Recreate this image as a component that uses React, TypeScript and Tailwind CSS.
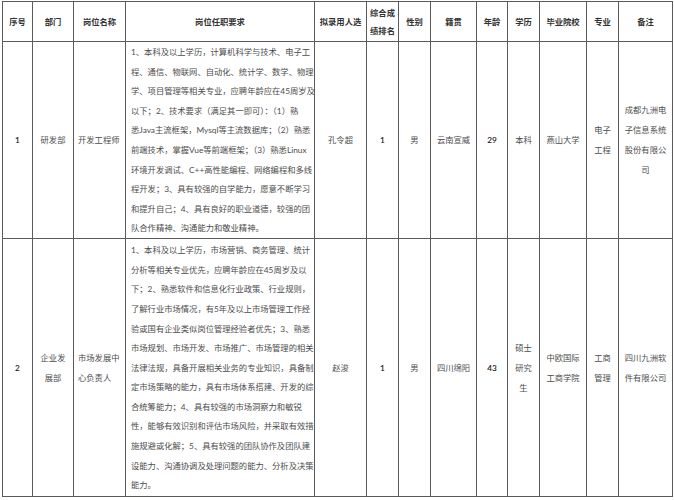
import React from "react";

const font = { fontFamily: '"Lato", "Noto Sans CJK SC", sans-serif' };

const row1Req = [
  "1、本科及以上学历，计算机科学与技术、电子工",
  "程、通信、物联网、自动化、统计学、数学、物理",
  "学、项目管理等相关专业，应聘年龄应在45周岁及",
  "以下；2、技术要求（满足其一即可）：（1）熟",
  "悉Java主流框架，Mysql等主流数据库；（2）熟悉",
  "前端技术，掌握Vue等前端框架；（3）熟悉Linux",
  "环境开发调试、C++高性能编程、网络编程和多线",
  "程开发；3、具有较强的自学能力，愿意不断学习",
  "和提升自己；4、具有良好的职业道德，较强的团",
  "队合作精神、沟通能力和敬业精神。",
];

const row2Req = [
  "1、本科及以上学历，市场营销、商务管理、统计",
  "分析等相关专业优先，应聘年龄应在45周岁及以",
  "下；2、熟悉软件和信息化行业政策、行业规则，",
  "了解行业市场情况，有5年及以上市场管理工作经",
  "验或国有企业类似岗位管理经验者优先；3、熟悉",
  "市场规划、市场开发、市场推广、市场管理的相关",
  "法律法规，具备开展相关业务的专业知识，具备制",
  "定市场策略的能力，具有市场体系搭建、开发的综",
  "合统筹能力；4、具有较强的市场洞察力和敏锐",
  "性，能够有效识别和评估市场风险，并采取有效措",
  "施规避或化解；5、具有较强的团队协作及团队建",
  "设能力、沟通协调及处理问题的能力、分析及决策",
  "能力。",
];

function Cell({
  lines,
  align = "center",
  bold = false,
  num = false,
  leading = "leading-[20px]",
}: {
  lines: string[];
  align?: "center" | "left";
  bold?: boolean;
  num?: boolean;
  leading?: string;
}) {
  return (
    <div
      className={`border-r border-b border-[#5a5a5a] flex flex-col justify-center ${
        align === "center" ? "items-center text-center" : "items-start text-left pl-[4px]"
      } ${leading} ${bold ? "font-bold text-[#333]" : num ? "font-semibold text-[#222]" : "text-[#4d4d4d]"}`}
    >
      {lines.map((l, i) => (
        <div key={i} className="whitespace-nowrap">
          {l}
        </div>
      ))}
    </div>
  );
}

function Req({ lines }: { lines: string[] }) {
  return (
    <div className="border-r border-b border-[#5a5a5a] flex flex-col justify-center pl-[5px] pt-[2px] leading-[19.6px] text-[#4d4d4d]">
      {lines.map((l, i) => (
        <div key={i} className="whitespace-nowrap">
          {l}
        </div>
      ))}
    </div>
  );
}

export default function App() {
  return (
    <div className="w-[674px] h-[500px] bg-white overflow-hidden" style={font}>
      <div className="ml-[2px] mt-[1px] w-[671px] border-l border-t border-[#5a5a5a] grid grid-cols-[30px_41px_52px_189px_52px_32px_32px_46px_31px_32px_47px_32px_54px] grid-rows-[40px_197px_258px] text-[8.3px]">
        {/* header */}
        <Cell lines={["序号"]} bold />
        <Cell lines={["部门"]} bold />
        <Cell lines={["岗位名称"]} bold />
        <Cell lines={["岗位任职要求"]} bold />
        <Cell lines={["拟录用人选"]} bold />
        <Cell lines={["综合成", "绩排名"]} bold leading="leading-[18px]" />
        <Cell lines={["性别"]} bold />
        <Cell lines={["籍贯"]} bold />
        <Cell lines={["年龄"]} bold />
        <Cell lines={["学历"]} bold />
        <Cell lines={["毕业院校"]} bold />
        <Cell lines={["专业"]} bold />
        <Cell lines={["备注"]} bold />

        {/* row 1 */}
        <Cell lines={["1"]} num />
        <Cell lines={["研发部"]} />
        <Cell lines={["开发工程师"]} align="left" />
        <Req lines={row1Req} />
        <Cell lines={["孔令超"]} />
        <Cell lines={["1"]} num />
        <Cell lines={["男"]} />
        <Cell lines={["云南宣威"]} />
        <Cell lines={["29"]} num />
        <Cell lines={["本科"]} />
        <Cell lines={["燕山大学"]} />
        <Cell lines={["电子", "工程"]} />
        <Cell lines={["成都九洲电", "子信息系统", "股份有限公", "司"]} />

        {/* row 2 */}
        <Cell lines={["2"]} num />
        <Cell lines={["企业发", "展部"]} />
        <Cell lines={["市场发展中", "心负责人"]} align="left" />
        <Req lines={row2Req} />
        <Cell lines={["赵浚"]} />
        <Cell lines={["1"]} num />
        <Cell lines={["男"]} />
        <Cell lines={["四川绵阳"]} />
        <Cell lines={["43"]} num />
        <Cell lines={["硕士", "研究", "生"]} />
        <Cell lines={["中欧国际", "工商学院"]} />
        <Cell lines={["工商", "管理"]} />
        <Cell lines={["四川九洲软", "件有限公司"]} />
      </div>
    </div>
  );
}
